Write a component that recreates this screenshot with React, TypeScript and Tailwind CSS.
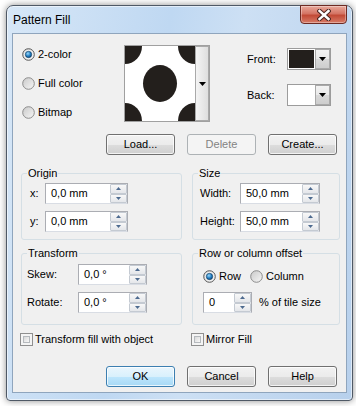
import React from "react";

function Radio({ on }: { on?: boolean }) {
  return (
    <svg width="13" height="13" viewBox="0 0 13 13" className="shrink-0">
      <defs>
        <linearGradient id="radioBg" x1="0" y1="0" x2="1" y2="1">
          <stop offset="0" stopColor="#c9c9c9" />
          <stop offset="1" stopColor="#f7f7f7" />
        </linearGradient>
        <radialGradient id="radioDot" cx="0.4" cy="0.35" r="0.75">
          <stop offset="0" stopColor="#9ad8fa" />
          <stop offset="0.55" stopColor="#1f7bc0" />
          <stop offset="1" stopColor="#0b3f6e" />
        </radialGradient>
      </defs>
      <circle cx="6.5" cy="6.5" r="5.8" fill="url(#radioBg)" stroke={on ? "#5b5b5b" : "#8c8c8c"} strokeWidth="1" />
      {on && <circle cx="6.5" cy="6.5" r="4.5" fill="#f4f4f4" />}
      {on && <circle cx="6.5" cy="6.5" r="3.2" fill="url(#radioDot)" stroke="#123a5c" strokeWidth="0.6" />}
    </svg>
  );
}

function Check() {
  return (
    <span className="w-[13px] h-[13px] shrink-0 border border-[#8f8f8f] bg-[#f4f4f4] p-[2px]">
      <span className="block w-full h-full border border-[#b5b9bd] bg-[linear-gradient(135deg,#d8d8d8,#f9f9f9)]" />
    </span>
  );
}

function Arrow({ up, color = "#000" }: { up?: boolean; color?: string }) {
  return (
    <svg width="7" height="4" viewBox="0 0 7 4">
      <path d={up ? "M0 4 L3.5 0 L7 4 Z" : "M0 0 L7 0 L3.5 4 Z"} fill={color} />
    </svg>
  );
}

function SpinBtn({ up }: { up?: boolean }) {
  return (
    <div className="flex-1 flex items-center justify-center border border-[#c4cad2] rounded-[1px] bg-[linear-gradient(#f8f8f8,#e4e6ea)]">
      <svg width="5" height="3" viewBox="0 0 5 3">
        <path d={up ? "M0 3 L2.5 0 L5 3 Z" : "M0 0 L5 0 L2.5 3 Z"} fill="#4d6a8f" />
      </svg>
    </div>
  );
}

function Spin({ value, className }: { value: string; className: string }) {
  return (
    <div className={`flex h-[21px] border border-[#abadb3] border-b-[#d9dde4] bg-white ${className}`}>
      <div className="flex-1 flex items-center pl-[5px]">{value}</div>
      <div className="w-[17px] flex flex-col">
        <SpinBtn up />
        <SpinBtn />
      </div>
    </div>
  );
}

function Btn({ children, def, disabled }: { children: React.ReactNode; def?: boolean; disabled?: boolean }) {
  if (disabled)
    return (
      <div className="w-[69px] h-[21px] flex items-center justify-center rounded-[3px] border border-[#adb2b5] bg-[#f4f4f4] text-[#838383]">
        {children}
      </div>
    );
  return (
    <div
      className={`w-[69px] h-[21px] flex items-center justify-center rounded-[3px] border shadow-[inset_0_0_0_1px_rgba(255,255,255,0.75)] ${
        def
          ? "border-[#3c7fb1] bg-[linear-gradient(#eaf6fd,#d9f0fc_50%,#bee6fd_50%,#a7d9f5)]"
          : "border-[#707070] bg-[linear-gradient(#f2f2f2,#ebebeb_50%,#dddddd_50%,#cfcfcf)]"
      }`}
    >
      {children}
    </div>
  );
}

function Swatch({ color }: { color: string }) {
  return (
    <div className="w-[44px] h-[22px] flex border border-[#9c9c9c] bg-white">
      <div className="flex-1 border border-white" style={{ backgroundColor: color }} />
      <div className="w-[15px] flex items-center justify-center border border-[#a9a9a9] bg-[linear-gradient(#f3f3f3,#e9e9e9_50%,#d9d9d9_50%,#cdcdcd)]">
        <Arrow />
      </div>
    </div>
  );
}

function Group({ title, className, children }: { title: string; className: string; children: React.ReactNode }) {
  return (
    <div className={`relative border border-[#d5dfe5] rounded-[3px] ${className}`}>
      <span className="absolute -top-[8px] left-[5px] bg-[#f0f0f0] px-[1px] leading-[14px]">{title}</span>
      {children}
    </div>
  );
}

function Pattern() {
  const ink = "#231f1c";
  return (
    <svg width="70" height="75" viewBox="0 0 70 75">
      <rect width="70" height="75" fill="#fff" />
      <ellipse cx="35" cy="37.5" rx="17" ry="18.5" fill={ink} />
      <ellipse cx="0" cy="0" rx="17" ry="18" fill={ink} />
      <ellipse cx="70" cy="0" rx="17" ry="18" fill={ink} />
      <ellipse cx="0" cy="75" rx="17" ry="18" fill={ink} />
      <ellipse cx="70" cy="75" rx="17" ry="18" fill={ink} />
    </svg>
  );
}

export default function App() {
  return (
    <div className="w-[356px] h-[406px] bg-white pl-[6px] pt-[5px] font-['Liberation_Sans',Arial,sans-serif] text-[11px] text-black leading-none">
      <div className="relative flex flex-col w-[347px] h-[396px] rounded-t-[7px] rounded-b-[4px] border border-[#4f5966] shadow-[0_0_7px_rgba(0,0,0,0.45),inset_0_0_0_1px_rgba(255,255,255,0.55)] bg-[linear-gradient(100deg,#d7e7f7_0%,#bfd8f2_40%,#cde0f4_58%,#b7d0ec_100%)] px-[5px] pb-[7px]">
        <div className="h-[27px] flex items-center pl-[1px] text-[12px]">Pattern Fill</div>

        <div className="absolute -top-px right-[5px] w-[47px] h-[19px] flex items-center justify-center rounded-b-[4px] border border-[#6d2a23] bg-[linear-gradient(#e9a99b,#d47464_45%,#c24a36_55%,#d77c68)] shadow-[inset_0_0_0_1px_rgba(255,255,255,0.35)]">
          <svg width="14" height="12" viewBox="0 0 14 12">
            <path d="M2.5 2 L11.5 10 M11.5 2 L2.5 10" stroke="#4a2420" strokeWidth="4.4" strokeLinecap="square" />
            <path d="M2.5 2 L11.5 10 M11.5 2 L2.5 10" stroke="#fff" strokeWidth="2.4" strokeLinecap="square" />
          </svg>
        </div>

        <div className="flex-1 bg-[#f0f0f0] border border-[#8fa5bd]">
          {/* top: type radios, preview, colours */}
          <div className="flex h-[94px]">
            <div className="w-[111px] pl-[9px] pt-[6px] flex flex-col">
              <div className="h-[29px] flex items-center gap-[3px]">
                <Radio on />
                <span>2-color</span>
              </div>
              <div className="h-[29px] flex items-center gap-[3px]">
                <Radio />
                <span>Full color</span>
              </div>
              <div className="h-[29px] flex items-center gap-[3px]">
                <Radio />
                <span>Bitmap</span>
              </div>
            </div>
            <div className="mt-[11px] w-[86px] h-[77px] flex border border-[#a0a0a0] bg-white">
              <Pattern />
              <div className="w-[14px] flex items-center justify-center border border-[#a9a9a9] bg-[linear-gradient(90deg,#f4f4f4,#dedede)]">
                <Arrow />
              </div>
            </div>
            <div className="ml-[37px] mt-[14px] grid grid-cols-[40px_44px] gap-y-[14px] self-start">
              <span className="self-center">Front:</span>
              <Swatch color="#231f1c" />
              <span className="self-center">Back:</span>
              <Swatch color="#ffffff" />
            </div>
          </div>

          <div className="flex justify-end gap-[12px] pr-[9px] mt-[6px]">
            <Btn>Load...</Btn>
            <Btn disabled>Delete</Btn>
            <Btn>Create...</Btn>
          </div>

          <div className="flex pl-[8px] gap-[10px] mt-[18px]">
            <Group title="Origin" className="w-[161px] pt-[9px] pb-[7px] pl-[8px]">
              <div className="flex items-center">
                <span className="w-[15px]">x:</span>
                <Spin value="0,0 mm" className="w-[83px]" />
              </div>
              <div className="flex items-center mt-[7px]">
                <span className="w-[15px]">y:</span>
                <Spin value="0,0 mm" className="w-[83px]" />
              </div>
            </Group>
            <Group title="Size" className="w-[148px] pt-[9px] pb-[7px] pl-[7px]">
              <div className="flex items-center">
                <span className="w-[40px]">Width:</span>
                <Spin value="50,0 mm" className="w-[80px]" />
              </div>
              <div className="flex items-center mt-[7px]">
                <span className="w-[40px]">Height:</span>
                <Spin value="50,0 mm" className="w-[80px]" />
              </div>
            </Group>
          </div>

          <div className="flex pl-[8px] gap-[10px] mt-[13px]">
            <Group title="Transform" className="w-[161px] pt-[10px] pb-[11px] pl-[5px]">
              <div className="flex items-center">
                <span className="w-[51px]">Skew:</span>
                <Spin value="0,0 °" className="w-[69px]" />
              </div>
              <div className="flex items-center mt-[7px]">
                <span className="w-[51px]">Rotate:</span>
                <Spin value="0,0 °" className="w-[69px]" />
              </div>
            </Group>
            <Group title="Row or column offset" className="w-[148px] pt-[15px] pb-[11px] pl-[10px]">
              <div className="flex items-center h-[14px]">
                <div className="w-[47px] flex items-center gap-[3px]">
                  <Radio on />
                  <span>Row</span>
                </div>
                <div className="flex items-center gap-[3px]">
                  <Radio />
                  <span>Column</span>
                </div>
              </div>
              <div className="flex items-center mt-[9px]">
                <Spin value="0" className="w-[49px]" />
                <span className="ml-[7px]">% of tile size</span>
              </div>
            </Group>
          </div>

          <div className="flex items-center pl-[7px] mt-[8px]">
            <div className="w-[171px] flex items-center gap-[2px]">
              <Check />
              <span>Transform fill with object</span>
            </div>
            <div className="flex items-center gap-[2px]">
              <Check />
              <span>Mirror Fill</span>
            </div>
          </div>

          <div className="flex justify-end gap-[12px] pr-[9px] mt-[20px]">
            <Btn def>OK</Btn>
            <Btn>Cancel</Btn>
            <Btn>Help</Btn>
          </div>
        </div>
      </div>
    </div>
  );
}
